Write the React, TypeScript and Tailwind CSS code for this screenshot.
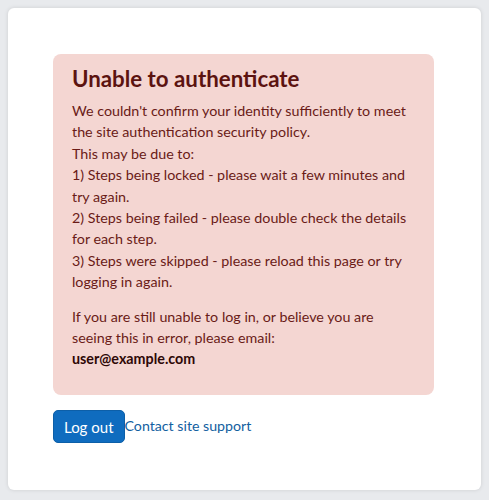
export default function App() {
  return (
    <div
      className="min-h-[500px] bg-[#e8eaed] p-2"
      style={{ fontFamily: 'Lato, "Open Sans", sans-serif' }}
    >
      <div className="h-[482px] rounded-md bg-white pl-[45px] pr-[47px] pt-[46px] shadow-[0_0_4px_rgba(0,0,0,0.12)]">
        <div className="rounded-lg bg-[#f4d6d2] px-[19px] pb-[25px] pt-[11px] text-[#6a1b17]">
          <h2 className="text-[22.3px] font-bold leading-[28px] text-[#5c1310]">
            Unable to authenticate
          </h2>
          <p className="mt-[7px] text-[14.3px] leading-[21.4px]">
            We couldn't confirm your identity sufficiently to meet the site authentication security policy.
            <br />
            This may be due to:
            <br />
            1) Steps being locked - please wait a few minutes and try again.
            <br />
            2) Steps being failed - please double check the details for each step.
            <br />
            3) Steps were skipped - please reload this page or try logging in again.
          </p>
          <p className="mt-[13px] text-[14.3px] leading-[21.4px]">
            If you are still unable to log in, or believe you are seeing this in error, please email:
            <br />
            <b className="text-[#2e0806]">user@example.com</b>
          </p>
        </div>
        <div className="mt-[15px] flex items-start">
          <button
            type="button"
            className="h-[33px] rounded-[5px] border border-[#0d5fa8] bg-[#0f6cbf] px-[10px] pt-[2px] text-[15px] text-white"
          >
            Log out
          </button>
          <a href="#" className="mt-[5px] text-[14.2px] text-[#12609f]">
            Contact site support
          </a>
        </div>
      </div>
    </div>
  )
}
